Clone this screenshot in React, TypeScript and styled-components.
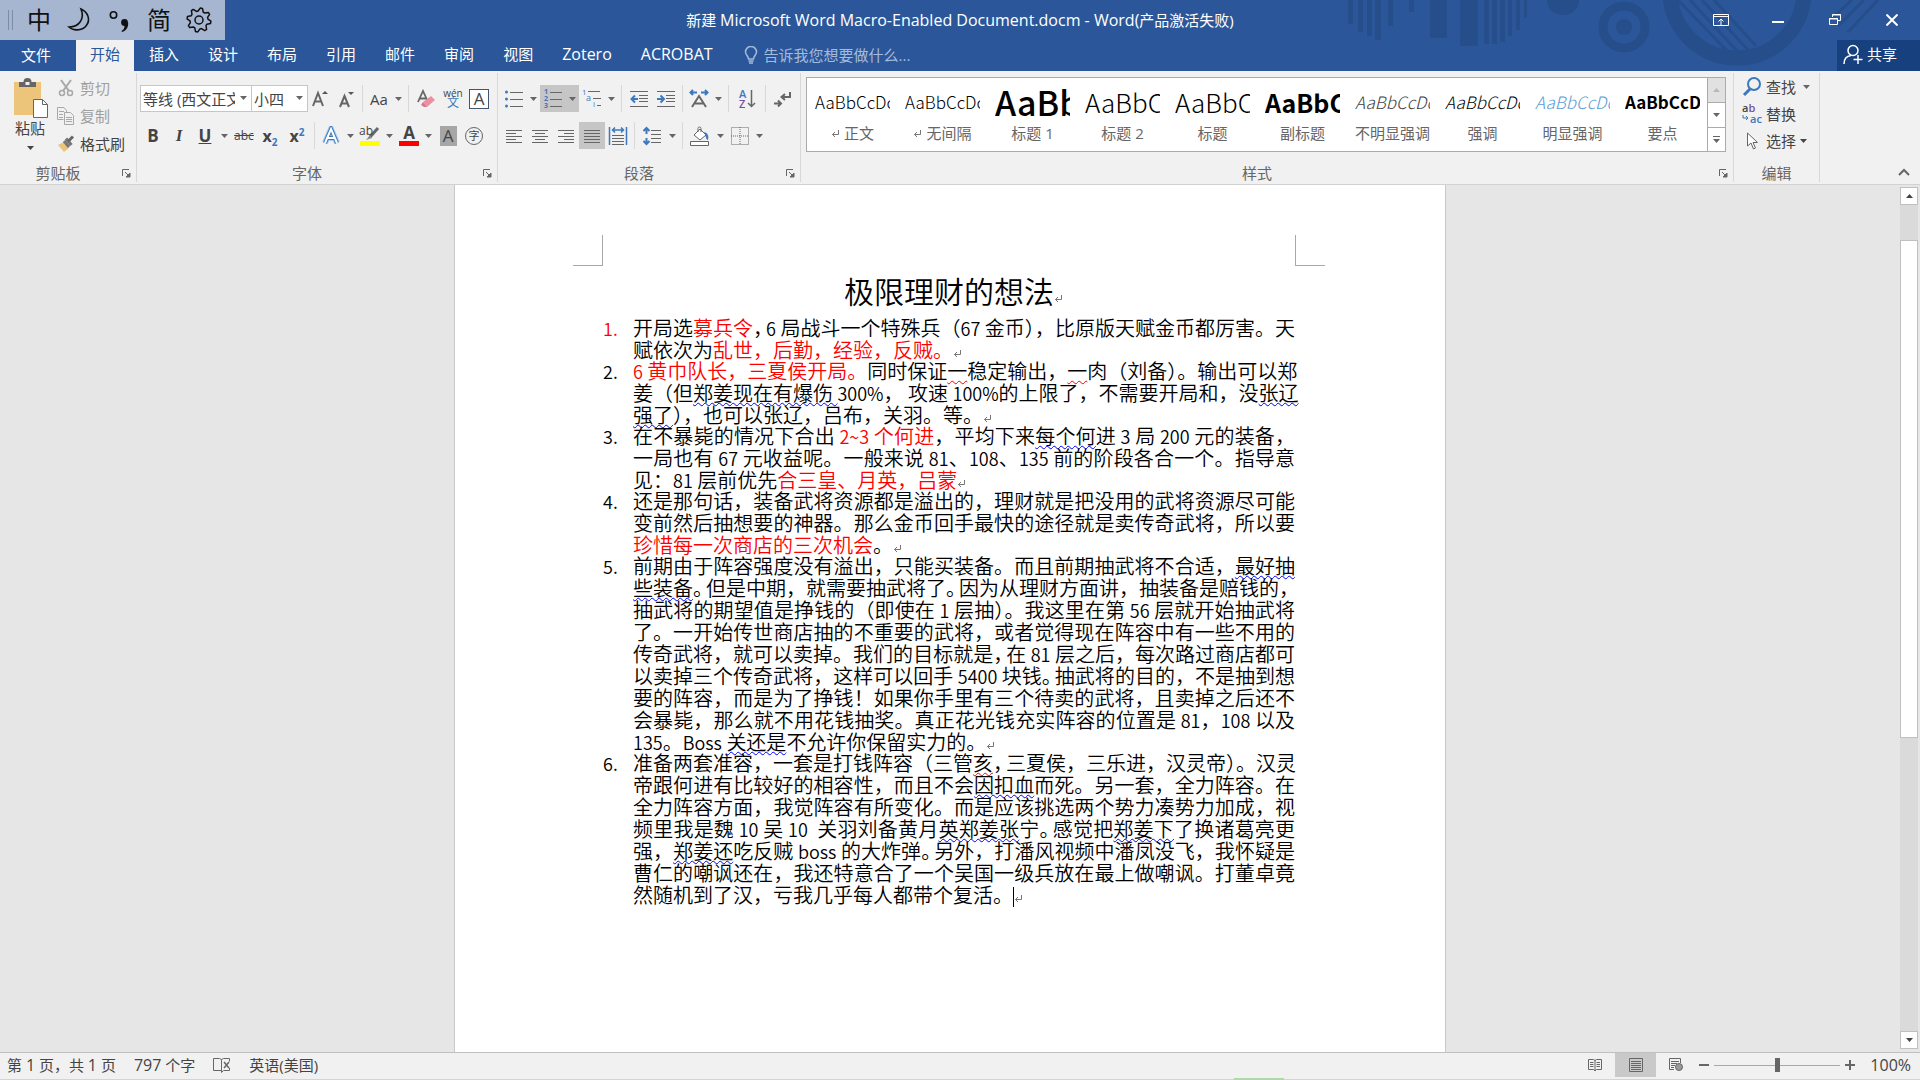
import React from 'react';
import styled, { createGlobalStyle, css } from 'styled-components';

const Global = createGlobalStyle`
  *, *::before, *::after { box-sizing: border-box; }
  body {
    margin: 0;
    color: #444;
    background: #e6e6e6;
    font: 15px/20px "Open Sans", "Noto Sans CJK SC", sans-serif;
  }
  button, input, select { font: inherit; color: inherit; }
  button { border: 0; padding: 0; background: none; cursor: pointer; }
`;

/* ---------- frame ---------- */

const Shell = styled.div`
  display: flex;
  flex-direction: column;
  height: 100vh;
  overflow: hidden;
`;

const Header = styled.header`
  position: relative;
  flex: none;
  background: #2b579a;
  color: #fff;
`;

const Pattern = styled.svg`
  position: absolute;
  top: 0;
  right: 0;
`;

const TitleBar = styled.div`
  position: relative;
  display: grid;
  grid-template-columns: 1fr auto 1fr;
  align-items: center;
  height: 40px;
`;

const DocName = styled.h1`
  margin: 0;
  font-size: 15px;
  font-weight: 400;
`;

const UiLatin = styled.span`
  font-size: 16px;
`;

const ImeBar = styled.div`
  display: flex;
  align-items: center;
  gap: 12px;
  width: 225px;
  height: 40px;
  padding-left: 8px;
  background: #a6b5d0;
  color: #111;
`;

const ImeKey = styled.button`
  display: grid;
  place-items: center;
  width: 28px;
  height: 40px;
  font-size: 24px;
  line-height: 40px;
`;

const ImeGrip = styled.span`
  width: 5px;
  height: 20px;
  border: solid #7d8ba6;
  border-width: 0 1px;
`;

const WindowControls = styled.div`
  display: flex;
  justify-content: flex-end;
`;

const WindowButton = styled.button`
  display: grid;
  place-items: center;
  width: 57px;
  height: 40px;
`;

const TabBar = styled.nav`
  position: relative;
  display: flex;
  align-items: stretch;
  gap: 1px;
  height: 31px;
`;

const Tab = styled.button<{ $active?: boolean; $file?: boolean }>`
  padding: ${p => (p.$file ? '0 24px 2px 21px' : '0 14px 4px')};
  white-space: nowrap;
  color: #fff;
  ${p => p.$active && css`
    background: #f1f1f1;
    color: #2b579a;
  `}
`;

const TellMe = styled.label`
  display: flex;
  align-items: center;
  gap: 6px;
  flex: 1;
  padding: 0 0 2px 16px;
  color: #a5bbdc;
`;

const TellInput = styled.input`
  width: 240px;
  padding: 0;
  border: 0;
  outline: 0;
  background: transparent;
  &::placeholder { color: #a5bbdc; opacity: 1; }
`;

const Share = styled.button`
  display: flex;
  align-items: center;
  gap: 4px;
  width: 83px;
  padding: 0 0 4px 6px;
  background: #17417e;
  color: #fff;
`;

/* ---------- ribbon ---------- */

const Ribbon = styled.div`
  display: flex;
  flex: none;
  height: 114px;
  background: #f1f1f1;
  border-bottom: 1px solid #d2d2d2;
`;

const Group = styled.section<{ $w?: number; $grow?: boolean }>`
  display: flex;
  flex-direction: column;
  flex: ${p => (p.$grow ? '1 1 0' : 'none')};
  width: ${p => (p.$w ? `${p.$w}px` : 'auto')};
  min-width: 0;
  margin: 2px 0;
  border-right: 1px solid #d8d8d8;
`;

const GroupBody = styled.div`
  flex: 1;
  min-height: 0;
  overflow: hidden;
`;

const GroupFoot = styled.div<{ $launcher: boolean }>`
  display: grid;
  grid-template-columns: ${p => (p.$launcher ? '1fr 20px' : '1fr')};
  align-items: center;
  height: 18px;
  line-height: 18px;
  color: #666;
`;

const GroupLabel = styled.span`
  text-align: center;
`;

const Launcher = styled.button`
  display: grid;
  place-items: center;
  height: 18px;
`;

const ClipBody = styled(GroupBody)`
  display: flex;
  padding: 1px 0 0 12px;
`;

const PasteButton = styled.button`
  display: flex;
  flex-direction: column;
  align-items: center;
  width: 36px;
  padding-top: 4px;
`;

const PasteCaret = styled.span`
  padding-top: 2px;
  line-height: 8px;
`;

const Stack = styled.div<{ $left: number }>`
  display: flex;
  flex-direction: column;
  padding-left: ${p => p.$left}px;
`;

const TextTool = styled.button<{ $muted?: boolean; $compact?: boolean }>`
  display: flex;
  align-items: center;
  gap: 4px;
  height: ${p => (p.$compact ? 27 : 28)}px;
  white-space: nowrap;
  color: ${p => (p.$muted ? '#a0a0a0' : '#444')};
`;

const IconSlot = styled.span`
  display: grid;
  place-items: center;
  width: 20px;
`;

const ToolRows = styled(GroupBody)`
  display: flex;
  flex-direction: column;
  gap: 10px;
  padding: 12px 0 0 3px;
`;

const ToolRow = styled.div`
  display: flex;
  align-items: stretch;
  height: 27px;
`;

const ToolButton = styled.button<{ $w: number; $on?: boolean }>`
  display: flex;
  align-items: center;
  height: 27px;
  background: ${p => (p.$on ? '#c6c6c6' : 'transparent')};
  & > span:first-child {
    display: grid;
    place-items: center;
    width: ${p => p.$w}px;
  }
`;

const CaretSlot = styled.span`
  display: grid;
  place-items: center;
  width: 13px;
  color: #666;
`;

const Divider = styled.span`
  flex: none;
  width: 1px;
  margin: 0 3px;
  background: #d8d8d8;
`;

const Combo = styled.label<{ $w: number }>`
  position: relative;
  width: ${p => p.$w}px;
  margin-right: -1px;
  border: 1px solid #c6c6c6;
  background: #fff;
  color: #666;
  svg {
    position: absolute;
    right: 4px;
    top: 10px;
    pointer-events: none;
  }
`;

const ComboSelect = styled.select`
  appearance: none;
  width: 100%;
  height: 25px;
  padding: 0 16px 0 2px;
  border: 0;
  background: transparent;
  color: #444;
`;

const Glyph = styled.span<{ $size?: number; $bold?: boolean; $italic?: boolean; $line?: string }>`
  font-size: ${p => p.$size ?? 17}px;
  line-height: 20px;
  font-weight: ${p => (p.$bold ? 700 : 400)};
  font-style: ${p => (p.$italic ? 'italic' : 'normal')};
  text-decoration: ${p => p.$line ?? 'none'};
  sub, sup { font-size: 10px; line-height: 0; color: #3b78bd; }
`;

const SerifGlyph = styled(Glyph)`
  font-family: "Liberation Serif", serif;
`;

const ShadedGlyph = styled(Glyph)`
  width: 17px;
  background: #a6a6a6;
`;

const BoxedGlyph = styled(Glyph)`
  width: 20px;
  border: 1px solid #44546a;
  background: #fff;
  line-height: 18px;
`;

const InkStack = styled.span<{ $ink: string }>`
  width: 20px;
  height: 20px;
  border-bottom: 5px solid ${p => p.$ink};
  font-weight: 700;
  font-size: 17px;
  line-height: 14px;
  text-align: center;
`;

const Pinyin = styled.span`
  display: flex;
  flex-direction: column;
  align-items: center;
  font-size: 10px;
  line-height: 8px;
  b { font-weight: 400; font-size: 12px; line-height: 12px; color: #3b78bd; }
`;

const CircledGlyph = styled.span`
  width: 18px;
  height: 18px;
  border: 1px solid #666;
  border-radius: 50%;
  font-size: 11px;
  line-height: 15px;
  text-align: center;
`;

/* ---------- style gallery ---------- */

const Gallery = styled.div`
  display: flex;
  height: 75px;
  margin: 4px 7px 0 5px;
  border: 1px solid #ababab;
  background: #fff;
`;

const StyleList = styled.div`
  display: flex;
  flex: 1;
  min-width: 0;
  overflow: hidden;
`;

const StyleItem = styled.button`
  display: flex;
  flex-direction: column;
  flex: none;
  width: 90px;
  padding: 3px 7px 0 8px;
  color: #666;
`;

const StyleName = styled.span`
  display: flex;
  align-items: center;
  justify-content: center;
  gap: 4px;
  width: 100%;
  white-space: nowrap;
`;

const Preview = styled.span<{ $size: number; $weight?: number; $italic?: boolean; $ink?: string }>`
  display: block;
  width: 100%;
  height: 42px;
  overflow: hidden;
  white-space: nowrap;
  text-align: left;
  font: ${p => (p.$italic ? 'italic' : 'normal')} ${p => p.$weight ?? 300} ${p => p.$size}px/42px "Noto Sans CJK SC", sans-serif;
  color: ${p => p.$ink ?? '#000'};
`;

const GalleryScroll = styled.div`
  display: grid;
  grid-template-rows: repeat(3, 1fr);
  width: 18px;
  border-left: 1px solid #ababab;
`;

const GalleryButton = styled.button<{ $off?: boolean }>`
  display: grid;
  place-items: center;
  background: ${p => (p.$off ? '#e1e1e1' : '#fff')};
  color: ${p => (p.$off ? '#b8b8b8' : '#666')};
  & + & { border-top: 1px solid #ababab; }
`;

const RibbonEnd = styled.div`
  display: flex;
  align-items: flex-end;
  justify-content: flex-end;
  width: 100px;
  padding: 0 9px 2px;
`;

/* ---------- document ---------- */

const Workspace = styled.main`
  display: flex;
  flex: 1;
  min-height: 0;
`;

const Canvas = styled.div`
  display: flex;
  justify-content: center;
  flex: 1;
  overflow: hidden;
`;

const Page = styled.article`
  width: 992px;
  padding: 50px 150px 0 148px;
  border: solid #c8c8c8;
  border-width: 0 1px;
  background: #fff;
  color: #000;
  font-family: "Noto Sans CJK SC", sans-serif;
  font-weight: 350;
`;

const MarginMarks = styled.div`
  display: flex;
  justify-content: space-between;
  margin: 0 -30px;
  &::before, &::after {
    content: "";
    width: 30px;
    height: 31px;
    border: 0 solid #a8a8a8;
    border-bottom-width: 1px;
  }
  &::before { border-right-width: 1px; }
  &::after { border-left-width: 1px; }
`;

const DocTitle = styled.h2`
  margin: 3px 0 6px;
  font-size: 30px;
  line-height: 42px;
  font-weight: inherit;
  text-align: center;
`;

const Items = styled.ol`
  margin: 0;
  padding: 0;
  list-style: none;
  counter-reset: item;
`;

const Item = styled.li<{ $red?: boolean }>`
  display: grid;
  grid-template-columns: 30px minmax(0, 1fr);
  margin-bottom: -1px;
  font-size: 20px;
  line-height: 22px;
  counter-increment: item;
  &::before {
    content: counter(item) ".";
    font-size: 18px;
    color: ${p => (p.$red ? '#f00' : 'inherit')};
  }
`;

const TextLine = styled.span<{ $full: boolean }>`
  display: block;
  white-space: nowrap;
  text-align-last: ${p => (p.$full ? 'justify' : 'left')};
`;

const Latin = styled.span`
  font-size: 18px;
`;

type Tone = 'red' | 'spell' | 'grammar' | 'half';

const wavy = (ink: string) => css`
  text-decoration: underline wavy ${ink} 1px;
  text-decoration-skip-ink: none;
  text-underline-offset: 1px;
`;

const Run = styled.span<{ $tone: Tone }>`
  ${p => p.$tone === 'red' && css`color: #f00;`}
  ${p => p.$tone === 'half' && css`
    margin-right: 3px;
    font-feature-settings: "halt";
  `}
  ${p => p.$tone === 'spell' && wavy('#f00')}
  ${p => p.$tone === 'grammar' && wavy('#00f')}
`;

const MarkSlot = styled.span`
  display: inline-block;
  width: 0;
  svg { overflow: visible; }
`;

const Cursor = styled.span`
  display: inline-block;
  width: 1px;
  height: 20px;
  background: #000;
  vertical-align: -4px;
`;

/* ---------- scroll bar ---------- */

const ScrollBar = styled.div`
  display: flex;
  flex-direction: column;
  width: 20px;
  padding: 2px 2px 3px 0;
`;

const ScrollArrow = styled.button`
  display: grid;
  place-items: center;
  height: 18px;
  border: 1px solid #c0c0c0;
  background: #fff;
`;

const ScrollTrack = styled.div`
  flex: 1;
  padding-top: 35px;
  background: #dadada;
`;

const ScrollThumb = styled.div`
  height: 63%;
  border: 1px solid #c0c0c0;
  background: #fff;
`;

/* ---------- status bar ---------- */

const StatusBar = styled.footer`
  display: flex;
  align-items: center;
  flex: none;
  height: 28px;
  padding: 0 9px 3px 7px;
  border-top: 1px solid #c0c0c0;
  background:
    linear-gradient(#b0d8a8, #b0d8a8) 66% 100% / 50px 2px no-repeat,
    linear-gradient(#d4d4d4, #d4d4d4) 0 100% / 100% 1px no-repeat,
    #f1f1f1;
`;

const StatusInfo = styled.div`
  display: flex;
  align-items: center;
  gap: 18px;
  flex: 1;
`;

const ViewButton = styled.button<{ $on?: boolean }>`
  display: grid;
  place-items: center;
  width: 41px;
  height: 24px;
  background: ${p => (p.$on ? '#c9c9c9' : 'transparent')};
`;

const ZoomBox = styled.div`
  display: flex;
  align-items: center;
  gap: 3px;
  button { width: 14px; height: 20px; display: grid; place-items: center; }
`;

const ZoomRange = styled.input`
  appearance: none;
  width: 126px;
  height: 16px;
  margin: 0;
  background: linear-gradient(#a8a8a8, #a8a8a8) center / 100% 1px no-repeat;
  &::-webkit-slider-thumb {
    appearance: none;
    width: 5px;
    height: 14px;
    background: #666;
  }
`;

const ZoomValue = styled.button`
  width: 54px;
  font-size: 16px;
  text-align: right;
`;

/* ---------- icons ---------- */

type IconProps = { w?: number; h?: number; children: React.ReactNode; stroke?: string; sw?: number };
const Icon = ({ w = 20, h = 20, children, stroke = '#666', sw = 1 }: IconProps) => (
  <svg width={w} height={h} viewBox={`0 0 ${w} ${h}`} fill="none" stroke={stroke} strokeWidth={sw} aria-hidden="true">
    {children}
  </svg>
);

const Caret = ({ up }: { up?: boolean }) => (
  <svg width="7" height="4" viewBox="0 0 7 4" aria-hidden="true">
    <path d={up ? 'M0 4h7L3.500 0z' : 'M0 0h7L3.500 4z'} fill="currentColor" />
  </svg>
);

const LauncherIcon = () => (
  <Icon w={9} h={9}>
    <path d="M.5 7V.5H7" />
    <path d="M3 3l4.500 4.500M8 4v4H4z" fill="#666" />
  </Icon>
);

const blue = '#3b78bd';

const PasteIcon = () => (
  <Icon w={36} h={40}>
    <path d="M2 4h27v33H2z" fill="#ecc57b" stroke="none" />
    <path d="M7 9V4h4.500a4 4 0 0 1 8 0H24v5z" fill="#666" stroke="none" />
    <path d="M13.500 4h4v3h-4z" fill="#f1f1f1" stroke="none" />
    <path d="M21.500 21.500h9l5 5v13h-14z" fill="#fff" />
    <path d="M30.500 21.500v5h5" />
  </Icon>
);

const CutIcon = () => (
  <Icon w={16} h={18} stroke="#a8a8a8" sw={2}>
    <path d="M3 1l8 11M13 1L5 12" />
    <circle cx="4" cy="14" r="2.500" strokeWidth="1.500" />
    <circle cx="12" cy="14" r="2.500" strokeWidth="1.500" />
  </Icon>
);

const CopyIcon = () => (
  <Icon w={18} h={18} stroke="#a8a8a8">
    <path d="M6.500 12.500h-6V.5H7l2.500 3v2M2 4.500h5M2 7.500h4M2 10.500h4" />
    <path d="M7.500 5.500h6l3 3v9h-9z" fill="#f1f1f1" />
    <path d="M9 10.500h6M9 12.500h6M9 14.500h6" />
  </Icon>
);

const BrushIcon = () => (
  <Icon w={18} h={18}>
    <path d="M1 10l6-3 5 6-5 4z" fill="#ecc57b" stroke="none" />
    <path d="M7 6l5 6M9 3.500l5.500 6.500" strokeWidth="3" stroke="#777" />
    <path d="M11 6.500l5-5" strokeWidth="3" stroke="#666" />
  </Icon>
);

const GrowFont = ({ down }: { down?: boolean }) => (
  <Icon w={16} h={18}>
    <path d={down ? 'M2 17L6.500 6 11 17M4 13.500h5' : 'M1 16L6 3l5 13M3 11.500h6'} strokeWidth="2" />
    <path d={down ? 'M10 2h6l-3 3z' : 'M10 4h6l-3-3z'} fill="#555" stroke="none" />
  </Icon>
);

const ClearFormat = () => (
  <Icon>
    <path d="M2 13L7 2l5 11M4 9.500h6" strokeWidth="1.800" />
    <path d="M7 13l8-6 4 4-8 7z" fill="#ec8fa3" stroke="none" />
    <path d="M7 13l4 5-3 0-3-2z" fill="#d9748b" stroke="none" />
  </Icon>
);

const OutlineA = () => (
  <Icon>
    <path d="M4 17L10 3l6 14M6.500 12h7" stroke="#a9cbef" strokeWidth="6" />
    <path d="M4 17L10 3l6 14M6.500 12h7" stroke="#3b78bd" strokeWidth="4" />
    <path d="M4 17L10 3l6 14M6.500 12h7" stroke="#fff" strokeWidth="2" />
  </Icon>
);

const HighlightIcon = () => (
  <Icon w={22} h={20}>
    <path d="M1 15h20v5H1z" fill="#ffff00" stroke="none" />
    <path d="M19 2l-8 9" stroke="#666" strokeWidth="3" />
    <path d="M11 9l2 3-6 2z" fill="#888" stroke="none" />
    <text x="0" y="9" fontSize="12" fill="#444" stroke="none">ab</text>
  </Icon>
);

const BulletsIcon = () => (
  <Icon>
    {[3, 10, 17].map(y => (
      <g key={y}>
        <circle cx="2.500" cy={y} r="1.500" fill={blue} stroke="none" />
        <path d={`M6 ${y + 0.5}h13`} />
      </g>
    ))}
  </Icon>
);

const NumbersIcon = () => (
  <Icon>
    {[3, 10, 17].map((y, i) => (
      <g key={y}>
        <text x="1" y={y + 2} fontSize="7" fontWeight="700" fill={blue} stroke="none">{i + 1}</text>
        <path d={`M7 ${y + 0.5}h12`} />
      </g>
    ))}
  </Icon>
);

const MultiIcon = () => (
  <Icon>
    <text x="0" y="6" fontSize="8" fill={blue} stroke="none">1</text>
    <text x="4" y="12" fontSize="9" fill={blue} stroke="none">a</text>
    <text x="11" y="18" fontSize="8" fill={blue} stroke="none">i</text>
    <path d="M6 2.500h12M11 9.500h8M15 16.500h4" />
  </Icon>
);

const IndentIcon = ({ out }: { out?: boolean }) => (
  <Icon>
    <path d="M1 2.500h18M10 6.500h9M10 9.500h9M10 12.500h9M1 17.500h18" />
    <path d={out ? 'M9 10H3M6 6.500L2.500 10 6 13.500' : 'M1 10h6M4.500 6.500L8 10l-3.500 3.500'} stroke={blue} strokeWidth="2" />
  </Icon>
);

const AsianLayoutIcon = () => (
  <Icon>
    <path d="M3 18L10 7l7 11M6 14.500h8" strokeWidth="2" />
    <path d="M1 3.500h7M12 3.500h7M4 1L1.500 3.500 4 6M16 1l2.500 2.500L16 6" stroke={blue} strokeWidth="2" />
  </Icon>
);

const SortIcon = () => (
  <Icon>
    <text x="2" y="9" fontSize="11" fontWeight="600" fill={blue} stroke="none">A</text>
    <text x="2" y="19" fontSize="11" fontWeight="600" fill="#7b4fa0" stroke="none">Z</text>
    <path d="M14.500 1v16M11 14l3.500 3.500L18 14" strokeWidth="1.500" />
  </Icon>
);

const MarksIcon = () => (
  <Icon>
    <path d="M18 3v5h-8M13 5L9.500 8 13 11M2 14.500h7M6 11.500l3 3-3 3" strokeWidth="2" />
  </Icon>
);

const AlignIcon = ({ kind }: { kind: 'left' | 'center' | 'right' | 'full' }) => (
  <Icon w={18}>
    {[4, 7, 10, 13, 16].map((y, i) => {
      const len = kind === 'full' || i % 2 === 0 ? 16 : 10;
      const x = kind === 'right' ? 17 - len : kind === 'center' ? 9 - len / 2 : 1;
      return <path key={y} d={`M${x} ${y + 0.5}h${len}`} />;
    })}
  </Icon>
);

const DistributeIcon = () => (
  <Icon>
    <path d="M1.500 1v18M18.500 1v18M5 4h10M7 1.500L4.500 4 7 6.500M13 1.500L15.500 4 13 6.500" stroke={blue} strokeWidth="1.500" />
    <path d="M4 9.500h12M4 12.500h12M4 15.500h12M4 18.500h12" />
  </Icon>
);

const SpacingIcon = () => (
  <Icon>
    <path d="M4.500 2v6M1.500 5l3-3 3 3M4.500 12v6M1.500 15l3 3 3-3" stroke={blue} strokeWidth="2" />
    <path d="M9 4.500h10M9 8.500h10M9 12.500h10M9 16.500h10" />
  </Icon>
);

const BucketIcon = () => (
  <Icon w={22}>
    <path d="M5 9l6-6 6 6-6 5zM9 6V2.500a1.500 1.500 0 0 1 3 0V6" fill="#fff" />
    <path d="M15 6c4 1 5 4 4 8-2 0-2-4-4-8z" fill={blue} stroke="none" />
    <path d="M1.500 15.500h18v4h-18z" fill="#fff" />
  </Icon>
);

const BordersIcon = () => (
  <Icon w={18} h={18}>
    <path d="M.5 .5h17v17H.5zM9 0v18M0 9h18" strokeDasharray="1 1" />
  </Icon>
);

const SearchIcon = () => (
  <Icon w={20} h={20} stroke={blue}>
    <circle cx="12" cy="7" r="6" strokeWidth="2" />
    <path d="M8 12l-6 6" strokeWidth="3" />
  </Icon>
);

const ReplaceIcon = () => (
  <Icon w={20} h={20}>
    <text x="0" y="8" fontSize="11" fontWeight="600" fill="#444" stroke="none">a<tspan fill="#7b4fa0">b</tspan></text>
    <text x="8" y="19" fontSize="11" fontWeight="600" fill={blue} stroke="none">ac</text>
    <path d="M1 11v3h5M4 12l2 2-2 2" stroke={blue} />
  </Icon>
);

const SelectIcon = () => (
  <Icon w={16} h={18}>
    <path d="M3.500 1v13l3.500-3 2.500 6 2-1L9 10.500h4.500z" fill="#fff" />
  </Icon>
);

const ReturnMark = () => (
  <svg width="9" height="9" viewBox="0 0 9 9" fill="none" stroke="#777" aria-hidden="true">
    <path d="M7.500 1v4.500H1.500M4 3L1.500 5.500 4 8" />
  </svg>
);

const MoonIcon = () => (
  <Icon w={26} h={26} stroke="#111" sw={1.6}>
    <path d="M15 2c7 3 10 11 5 17-4 5-13 5-17 1 10 0 16-8 12-18z" />
  </Icon>
);

const PunctIcon = () => (
  <Icon w={26} h={26} stroke="#111" sw={1.6}>
    <circle cx="7.500" cy="8" r="3.200" />
    <circle cx="18.500" cy="15.500" r="3.400" fill="#111" stroke="none" />
    <path d="M22 15c1 5-2 9-6 10l-.5-1c2-1 3-3 3-5z" fill="#111" stroke="none" />
  </Icon>
);

const gearPath = (() => {
  const pts: string[] = [];
  for (let i = 0; i < 32; i++) {
    const r = i % 4 < 2 ? 12 : 9;
    const a = ((i + 0.5) / 32) * Math.PI * 2;
    pts.push(`${(13 + r * Math.cos(a)).toFixed(1)} ${(13 + r * Math.sin(a)).toFixed(1)}`);
  }
  return `M${pts.join('L')}z`;
})();

const GearIcon = () => (
  <Icon w={26} h={26} stroke="#111" sw={1.5}>
    <path d={gearPath} strokeLinejoin="round" />
    <circle cx="13" cy="13" r="4" />
  </Icon>
);

const HeaderPattern = () => (
  <Pattern width="575" height="71" viewBox="1345 0 575 71" fill="#254e8a" aria-hidden="true">
    {[[1348, 5, 24], [1358, 5, 32], [1367, 5, 36], [1375, 6, 40], [1388, 5, 26], [1409, 5, 12], [1430, 17, 38], [1460, 18, 46], [1484, 5, 44], [1492, 5, 44], [1500, 5, 42], [1508, 4, 36], [1516, 4, 30], [1524, 3, 18]].map(
      ([x, w, h]) => <rect key={x} x={x} width={w} height={h} />,
    )}
    <path d="M1547 0h32c0 20-32 20-32 0z" />
    <g fill="none" stroke="#254e8a">
      <circle cx="1624" cy="27" r="21" strokeWidth="9" />
      <circle cx="1737" cy="-9" r="67" strokeWidth="15" />
      <path d="M1678 0l52 54M1690 0l50 54M1702 0l48 52M1714 0l42 46M1830 20l22-20M1838 26l26-26M1848 32l30-32" strokeWidth="3" />
    </g>
    <circle cx="1624" cy="27" r="8" />
  </Pattern>
);

/* ---------- composed controls ---------- */

type ToolProps = { label: string; w?: number; menu?: boolean; on?: boolean; children: React.ReactNode };
const Tool = ({ label, w = 26, menu, on, children }: ToolProps) => (
  <ToolButton type="button" aria-label={label} $w={w} $on={on}>
    <span>{children}</span>
    {menu && <CaretSlot><Caret /></CaretSlot>}
  </ToolButton>
);

const Foot = ({ label, launcher = true }: { label: string; launcher?: boolean }) => (
  <GroupFoot $launcher={launcher}>
    <GroupLabel>{label}</GroupLabel>
    {launcher && <Launcher type="button" aria-label={`${label}设置`}><LauncherIcon /></Launcher>}
  </GroupFoot>
);

type StyleDef = { name: string; sample?: string; size: number; weight?: number; italic?: boolean; ink?: string; mark?: boolean };
const styleDefs: StyleDef[] = [
  { name: '正文', size: 17, mark: true },
  { name: '无间隔', size: 17, mark: true },
  { name: '标题 1', sample: 'AaBb', size: 34, weight: 500 },
  { name: '标题 2', sample: 'AaBbC', size: 26 },
  { name: '标题', sample: 'AaBbC', size: 26 },
  { name: '副标题', sample: 'AaBbC', size: 25, weight: 700 },
  { name: '不明显强调', size: 17, italic: true, ink: '#404040' },
  { name: '强调', size: 17, italic: true },
  { name: '明显强调', size: 17, italic: true, ink: '#5b9bd5' },
  { name: '要点', sample: 'AaBbCcD', size: 17, weight: 700 },
];

type Piece = string | [string, Tone];
type DocItem = { red?: boolean; lines: Piece[][] };

const items: DocItem[] = [
  {
    red: true,
    lines: [
      ['开局选', ['募兵令', 'red'], ['，', 'half'], '6 局战斗一个特殊兵（67 金币），比原版天赋金币都厉害。天'],
      ['赋依次为', ['乱世，后勤，经验，反贼。', 'red']],
    ],
  },
  {
    lines: [
      [['6 黄巾队长，三夏侯开局。', 'red'], '同时保证', ['一', 'spell'], '稳定输出，', ['一', 'spell'], '肉（刘备）。输出可以郑'],
      ['姜（但', ['郑姜现在有爆伤 ', 'grammar'], '300%， 攻速 100%的上限了，不需要开局和，没', ['张辽', 'grammar']],
      [['强了', 'grammar'], '），也可以张辽，吕布，关羽。等。'],
    ],
  },
  {
    lines: [
      ['在不暴毙的情况下合出 ', ['2~3 个何进', 'red'], '，平均下来', ['每个何', 'grammar'], '进 3 局 200 元的装备，'],
      ['一局也有 67 元收益呢。一般来说 81、108、135 前的阶段各合一个。指导意'],
      ['见：81 层前优先', ['合三皇、月英，吕蒙', 'red']],
    ],
  },
  {
    lines: [
      ['还是那句话，装备武将资源都是溢出的，理财就是把没用的武将资源尽可能'],
      ['变前然后抽想要的神器。那么金币回手最快的途径就是卖传奇武将，所以要'],
      [['珍惜每一次商店的三次机会', 'red'], '。'],
    ],
  },
  {
    lines: [
      ['前期由于阵容强度没有溢出，只能买装备。而且前期抽武将不合适，', ['最好抽', 'grammar']],
      [['些装备', 'grammar'], ['。', 'half'], '但是中期，就需要抽武将了', ['。', 'half'], '因为从理财方面讲，抽装备是赔钱的，'],
      ['抽武将的期望值是挣钱的（即使在 1 层抽）。我这里在第 56 层就开始抽武将'],
      ['了。一开始传世商店抽的不重要的武将，或者觉得现在阵容中有一些不用的'],
      ['传奇武将，就可以卖掉。我们的目标就是', ['，', 'half'], '在 81 层之后，每次路过商店都可'],
      ['以卖掉三个传奇武将，这样可以回手 5400 块钱', ['。', 'half'], '抽武将的目的，不是抽到想'],
      ['要的阵容，而是为了挣钱！如果你手里有三个待卖的武将，且卖掉之后还不'],
      ['会暴毙，那么就不用花钱抽奖。真正花光钱充实阵容的位置是 81，108 以及'],
      ['135。Boss ', ['关还是', 'grammar'], '不允许你保留实力的。'],
    ],
  },
  {
    lines: [
      ['准备两套准容，一套是打钱阵容（三管', ['亥', 'spell'], ['，', 'half'], '三夏侯，三乐进，汉灵帝）。汉灵'],
      ['帝跟何进有比较好的相容性，而且不会', ['因扣血', 'grammar'], '而死。另一套，全力阵容。在'],
      ['全力阵容方面，我觉阵容有所变化。而是应该挑选两个势力凑势力加成，视'],
      ['频里我是魏 10 吴 10 \u00a0关羽刘备黄月', ['英郑姜张', 'grammar'], '宁', ['。', 'half'], '感觉把', ['郑姜下', 'grammar'], '了换诸葛亮更'],
      ['强，', ['郑姜还', 'grammar'], '吃反贼 boss 的大炸弹', ['。', 'half'], '另外，打潘风视频中潘凤没飞，我怀疑是'],
      ['曹仁的嘲讽还在，我还特意合了一个吴国一级兵放在最上做嘲讽。打董卓竟'],
      ['然随机到了汉，亏我几乎每人都带个复活。'],
    ],
  },
];

const splitLatin = (text: string) =>
  text.split(/([0-9A-Za-z%~]+)/).map((part, i) => (i % 2 ? <Latin key={i}>{part}</Latin> : part));

const Mark = () => <MarkSlot><ReturnMark /></MarkSlot>;

const tabs = ['插入', '设计', '布局', '引用', '邮件', '审阅', '视图'];
const addInTabs = ['Zotero', 'ACROBAT'];

export default function App() {
  return (
    <Shell>
      <Global />
      <Header>
        <HeaderPattern />
        <TitleBar>
          <ImeBar>
            <ImeGrip />
            <ImeKey type="button">中</ImeKey>
            <ImeKey type="button" aria-label="半角"><MoonIcon /></ImeKey>
            <ImeKey type="button" aria-label="中文标点"><PunctIcon /></ImeKey>
            <ImeKey type="button">简</ImeKey>
            <ImeKey type="button" aria-label="设置"><GearIcon /></ImeKey>
          </ImeBar>
          <DocName>新建 <UiLatin>Microsoft Word Macro-Enabled Document.docm - Word(</UiLatin>产品激活失败)</DocName>
          <WindowControls>
            <WindowButton type="button" aria-label="功能区显示选项">
              <Icon w={16} h={12} stroke="#fff"><path d="M.5 .5h15v11H.5zM0 2.500h16M8 11V5M5.500 7.500L8 5l2.500 2.500" /></Icon>
            </WindowButton>
            <WindowButton type="button" aria-label="最小化">
              <Icon w={12} h={12} stroke="#fff" sw={2}><path d="M0 8h12" /></Icon>
            </WindowButton>
            <WindowButton type="button" aria-label="还原">
              <Icon w={12} h={12} stroke="#fff"><path d="M3.500 3V.5h8v6H9M.5 4.500h8v6h-8zM0 5h9M3 1h9" /></Icon>
            </WindowButton>
            <WindowButton type="button" aria-label="关闭">
              <Icon w={12} h={12} stroke="#fff" sw={2}><path d="M.5 .5l11 11M11.500 .5l-11 11" /></Icon>
            </WindowButton>
          </WindowControls>
        </TitleBar>
        <TabBar>
          <Tab type="button" $file>文件</Tab>
          <Tab type="button" $active>开始</Tab>
          {tabs.map(t => <Tab key={t} type="button">{t}</Tab>)}
          {addInTabs.map(t => <Tab key={t} type="button"><UiLatin>{t}</UiLatin></Tab>)}
          <TellMe>
            <Icon w={14} h={18} stroke="#a5bbdc" sw={1.5}>
              <path d="M4.500 13c0-3-3-4-3-7a5.500 5.500 0 0 1 11 0c0 3-3 4-3 7zM4.500 15h5M5 17h4" />
            </Icon>
            <TellInput type="text" aria-label="告诉我您想要做什么" placeholder="告诉我您想要做什么..." />
          </TellMe>
          <Share type="button">
            <Icon w={20} h={20} stroke="#fff" sw={1.5}>
              <circle cx="10" cy="6.500" r="5" />
              <path d="M1 20c0-5 3-8 7-8.500M15 11v9M10.500 15.500h9" />
            </Icon>
            共享
          </Share>
        </TabBar>
      </Header>

      <Ribbon>
        <Group $w={137}>
          <ClipBody>
            <PasteButton type="button">
              <PasteIcon />
              粘贴
              <PasteCaret><Caret /></PasteCaret>
            </PasteButton>
            <Stack $left={8}>
              <TextTool type="button" $muted><IconSlot><CutIcon /></IconSlot>剪切</TextTool>
              <TextTool type="button" $muted><IconSlot><CopyIcon /></IconSlot>复制</TextTool>
              <TextTool type="button"><IconSlot><BrushIcon /></IconSlot>格式刷</TextTool>
            </Stack>
          </ClipBody>
          <Foot label="剪贴板" />
        </Group>

        <Group $w={361}>
          <ToolRows>
            <ToolRow>
              <Combo $w={112}>
                <ComboSelect aria-label="字体"><option>等线 (西文正文)</option></ComboSelect>
                <Caret />
              </Combo>
              <Combo $w={57}>
                <ComboSelect aria-label="字号"><option>小四</option></ComboSelect>
                <Caret />
              </Combo>
              <Tool label="增大字号"><GrowFont /></Tool>
              <Tool label="减小字号"><GrowFont down /></Tool>
              <Divider />
              <Tool label="更改大小写" menu><Glyph $size={15}>Aa</Glyph></Tool>
              <Divider />
              <Tool label="清除格式" w={28}><ClearFormat /></Tool>
              <Tool label="拼音指南"><Pinyin>wén<b>文</b></Pinyin></Tool>
              <Tool label="字符边框"><BoxedGlyph>A</BoxedGlyph></Tool>
            </ToolRow>
            <ToolRow>
              <Tool label="加粗"><Glyph $bold>B</Glyph></Tool>
              <Tool label="倾斜"><SerifGlyph $bold $italic>I</SerifGlyph></Tool>
              <Tool label="下划线" menu><Glyph $bold $line="underline">U</Glyph></Tool>
              <Tool label="删除线"><Glyph $size={12} $line="line-through">abc</Glyph></Tool>
              <Tool label="下标"><Glyph $bold $size={16}>x<sub>2</sub></Glyph></Tool>
              <Tool label="上标" w={28}><Glyph $bold $size={16}>x<sup>2</sup></Glyph></Tool>
              <Divider />
              <Tool label="文本效果" menu><OutlineA /></Tool>
              <Tool label="突出显示" menu><HighlightIcon /></Tool>
              <Tool label="字体颜色" menu><InkStack $ink="#ff0000">A</InkStack></Tool>
              <Tool label="字符底纹"><ShadedGlyph>A</ShadedGlyph></Tool>
              <Tool label="带圈字符"><CircledGlyph>字</CircledGlyph></Tool>
            </ToolRow>
          </ToolRows>
          <Foot label="字体" />
        </Group>

        <Group $w={303}>
          <ToolRows>
            <ToolRow>
              <Tool label="项目符号" menu><BulletsIcon /></Tool>
              <Tool label="编号" menu on><NumbersIcon /></Tool>
              <Tool label="多级列表" menu><MultiIcon /></Tool>
              <Divider />
              <Tool label="减少缩进" w={27}><IndentIcon out /></Tool>
              <Tool label="增加缩进" w={27}><IndentIcon /></Tool>
              <Divider />
              <Tool label="中文版式" menu><AsianLayoutIcon /></Tool>
              <Divider />
              <Tool label="排序" w={30}><SortIcon /></Tool>
              <Divider />
              <Tool label="显示编辑标记"><MarksIcon /></Tool>
            </ToolRow>
            <ToolRow>
              <Tool label="左对齐"><AlignIcon kind="left" /></Tool>
              <Tool label="居中"><AlignIcon kind="center" /></Tool>
              <Tool label="右对齐"><AlignIcon kind="right" /></Tool>
              <Tool label="两端对齐" on><AlignIcon kind="full" /></Tool>
              <Tool label="分散对齐"><DistributeIcon /></Tool>
              <Divider />
              <Tool label="行距" w={28} menu><SpacingIcon /></Tool>
              <Divider />
              <Tool label="底纹" w={28} menu><BucketIcon /></Tool>
              <Tool label="边框" menu><BordersIcon /></Tool>
            </ToolRow>
          </ToolRows>
          <Foot label="段落" />
        </Group>

        <Group $grow>
          <GroupBody>
            <Gallery>
              <StyleList>
                {styleDefs.map(s => (
                  <StyleItem key={s.name} type="button">
                    <Preview $size={s.size} $weight={s.weight} $italic={s.italic} $ink={s.ink}>
                      {s.sample ?? 'AaBbCcDc'}
                    </Preview>
                    <StyleName>{s.mark && <ReturnMark />}{s.name}</StyleName>
                  </StyleItem>
                ))}
              </StyleList>
              <GalleryScroll>
                <GalleryButton type="button" aria-label="上一行" $off><Caret up /></GalleryButton>
                <GalleryButton type="button" aria-label="下一行"><Caret /></GalleryButton>
                <GalleryButton type="button" aria-label="其他样式">
                  <Icon w={7} h={7}><path d="M0 .5h7" /><path d="M0 3h7L3.500 7z" fill="#666" stroke="none" /></Icon>
                </GalleryButton>
              </GalleryScroll>
            </Gallery>
          </GroupBody>
          <Foot label="样式" />
        </Group>

        <Group $w={86}>
          <GroupBody>
            <Stack $left={8}>
              <TextTool type="button" $compact><IconSlot><SearchIcon /></IconSlot>查找<CaretSlot><Caret /></CaretSlot></TextTool>
              <TextTool type="button" $compact><IconSlot><ReplaceIcon /></IconSlot>替换</TextTool>
              <TextTool type="button" $compact><IconSlot><SelectIcon /></IconSlot>选择<Caret /></TextTool>
            </Stack>
          </GroupBody>
          <Foot label="编辑" launcher={false} />
        </Group>

        <RibbonEnd>
          <button type="button" aria-label="折叠功能区">
            <Icon w={14} h={12} sw={2}><path d="M2 9l5-5 5 5" /></Icon>
          </button>
        </RibbonEnd>
      </Ribbon>

      <Workspace>
        <Canvas>
          <Page>
            <MarginMarks />
            <DocTitle>极限理财的想法<Mark /></DocTitle>
            <Items>
              {items.map((item, n) => (
                <Item key={n} $red={item.red}>
                  <div>
                    {item.lines.map((line, i) => {
                      const last = i === item.lines.length - 1;
                      return (
                        <TextLine key={i} $full={!last}>
                          {line.map((piece, j) =>
                            typeof piece === 'string'
                              ? <React.Fragment key={j}>{splitLatin(piece)}</React.Fragment>
                              : <Run key={j} $tone={piece[1]}>{splitLatin(piece[0])}</Run>,
                          )}
                          {last && n === items.length - 1 && <Cursor />}
                          {last && <Mark />}
                        </TextLine>
                      );
                    })}
                  </div>
                </Item>
              ))}
            </Items>
          </Page>
        </Canvas>
        <ScrollBar>
          <ScrollArrow type="button" aria-label="向上滚动"><Caret up /></ScrollArrow>
          <ScrollTrack><ScrollThumb /></ScrollTrack>
          <ScrollArrow type="button" aria-label="向下滚动"><Caret /></ScrollArrow>
        </ScrollBar>
      </Workspace>

      <StatusBar>
        <StatusInfo>
          <span>第 <UiLatin>1</UiLatin> 页，共 <UiLatin>1</UiLatin> 页</span>
          <span><UiLatin>797</UiLatin> 个字</span>
          <Icon w={18} h={16}>
            <path d="M8.500 13.500h-8V1.500h6l2 1v13M8.500 2.500l2-1h6v3M16.500 11v2.500h-6l-2 2" />
            <path d="M11 5l5 6M16 5l-5 6" strokeWidth="1.500" />
          </Icon>
          <span>英语(美国)</span>
        </StatusInfo>
        <ViewButton type="button" aria-label="阅读视图">
          <Icon w={14} h={14}><path d="M.5 1.500h5l1.500 1 1.500-1h5v10h-5l-1.500 1.500-1.500-1.500h-5zM7 2v11M2 4.500h3.500M2 6.500h3.500M2 8.500h3.500M8.500 4.500H12M8.500 6.500H12M8.500 8.500H12" /></Icon>
        </ViewButton>
        <ViewButton type="button" aria-label="页面视图" $on>
          <Icon w={14} h={14}><path d="M.5 .5h13v13H.5zM2 3.500h10M2 5.500h10M2 7.500h10M2 9.500h10M2 11.500h10" /></Icon>
        </ViewButton>
        <ViewButton type="button" aria-label="Web 版式视图">
          <Icon w={15} h={14}><path d="M5 11.500H.5V.5h11V5M2 3.500h8M2 5.500h6M2 7.500h4M2 9.500h3" /><circle cx="10" cy="9" r="3.500" fill="#999" /></Icon>
        </ViewButton>
        <ZoomBox>
          <button type="button" aria-label="缩小"><Icon w={10} h={10} sw={2}><path d="M0 5h10" /></Icon></button>
          <ZoomRange type="range" min="0" max="200" defaultValue="100" aria-label="显示比例" />
          <button type="button" aria-label="放大"><Icon w={10} h={10} sw={2}><path d="M0 5h10M5 0v10" /></Icon></button>
        </ZoomBox>
        <ZoomValue type="button">100%</ZoomValue>
      </StatusBar>
    </Shell>
  );
}
